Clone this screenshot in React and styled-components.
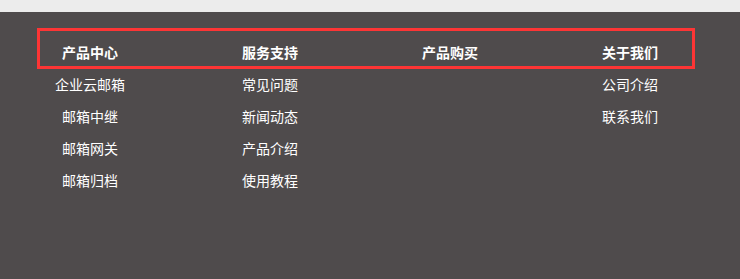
import React from "react";
import styled, { createGlobalStyle } from "styled-components";

const GlobalStyle = createGlobalStyle`
  html, body {
    margin: 0;
    padding: 0;
    background: #4f4b4c;
  }
  body {
    font-family: "Noto Sans CJK SC", "Liberation Sans", sans-serif;
  }
`;

// Light strip above the footer
const TopStrip = styled.div`
  height: 12px;
  background: #ececec;
`;

const Footer = styled.footer`
  position: relative;
  box-sizing: border-box;
  height: 267px;
  padding-top: 24px;
  background: #4f4b4c;
`;

const Columns = styled.div`
  display: grid;
  grid-template-columns: repeat(4, 180px);
`;

const Column = styled.ul`
  list-style: none;
  margin: 0;
  padding: 0;
  display: flex;
  flex-direction: column;
  align-items: center;
`;

const Item = styled.li`
  height: 32px;
  line-height: 32px;
  font-size: 14px;
  font-weight: ${(p) => (p.$head ? 700 : 400)};
  color: #ffffff;
  white-space: nowrap;
`;

// Red annotation frame drawn over the heading row
const Highlight = styled.div`
  position: absolute;
  left: 37px;
  top: 16px;
  width: 658px;
  height: 41px;
  box-sizing: border-box;
  border: 3px solid #fd3535;
  pointer-events: none;
`;

const columns = [
  { title: "产品中心", links: ["企业云邮箱", "邮箱中继", "邮箱网关", "邮箱归档"] },
  { title: "服务支持", links: ["常见问题", "新闻动态", "产品介绍", "使用教程"] },
  { title: "产品购买", links: [] },
  { title: "关于我们", links: ["公司介绍", "联系我们"] },
];

const App = () => {
  return (
    <>
      <GlobalStyle />
      <TopStrip />
      <Footer>
        <Columns>
          {columns.map((col) => (
            <Column key={col.title}>
              <Item $head>{col.title}</Item>
              {col.links.map((l) => (
                <Item key={l}>{l}</Item>
              ))}
            </Column>
          ))}
        </Columns>
        <Highlight />
      </Footer>
    </>
  );
};

export default App;
